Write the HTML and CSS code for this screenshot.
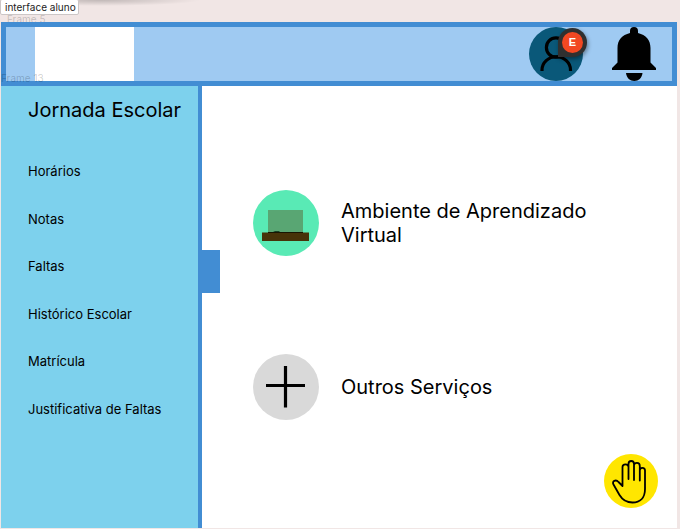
FILE: index.html
```html
<!DOCTYPE html>
<html lang="pt-BR">
<head>
<meta charset="utf-8">
<meta name="viewport" content="width=device-width, initial-scale=1">
<title>interface aluno</title>
<link rel="stylesheet" href="styles.css">
</head>
<body>
<div class="canvas-bar">
  <span class="frame-title">interface aluno</span>
  <span class="frame-label frame-label-top">Frame 5</span>
</div>
<header class="topbar">
  <div class="logo"></div>
  <span class="frame-label frame-label-side">Frame 13</span>
  <div class="actions">
    <button class="avatar" type="button" aria-label="Perfil">
      <svg viewBox="0 0 54 54" fill="none" stroke="#000" stroke-width="3.2">
        <circle cx="27" cy="20.500" r="9.600"/>
        <path d="M13 44v-1a14 13 0 0 1 28.500 0v1"/>
      </svg>
      <span class="pin"><span class="pin-face">E</span></span>
    </button>
    <button class="bell" type="button" aria-label="Notificações">
      <svg viewBox="0 0 44 54">
        <path d="M18 6V4a4 4 0 0 1 8 0v2c8 2 12.500 7 12.500 15v14.500L44 41v2H0v-2l5.500-5.500V21C5.500 13 10 8 18 6z"/>
        <path d="M14 46h16.500c-.5 5-4 8-8.200 8S14.500 51 14 46z"/>
      </svg>
    </button>
  </div>
</header>
<div class="layout">
  <aside class="sidebar">
    <h1>Jornada Escolar</h1>
    <nav class="menu">
      <a href="#horarios">Horários</a>
      <a href="#notas">Notas</a>
      <a href="#faltas">Faltas</a>
      <a href="#historico">Histórico Escolar</a>
      <a href="#matricula">Matrícula</a>
      <a href="#justificativa">Justificativa de Faltas</a>
    </nav>
    <button class="handle" type="button" aria-label="Recolher menu"></button>
  </aside>
  <main class="services">
    <a class="service" href="#ambiente">
      <svg class="service-icon" viewBox="0 0 66 66">
        <circle cx="33" cy="33" r="33" fill="#59eab5"/>
        <path fill="#59a673" d="M15 20h35v22H15z"/>
        <path fill="#473309" d="M9 42.500h47V51H9z"/>
        <path fill="#181603" d="M15 42h35v1H15z"/>
        <path fill="#164426" d="M20 42l2-1h4l1 1z"/>
      </svg>
      <span class="service-name">Ambiente de Aprendizado Virtual</span>
    </a>
    <a class="service" href="#outros">
      <svg class="service-icon" viewBox="0 0 66 66">
        <circle cx="33" cy="33" r="33" fill="#d9d9d9"/>
        <path d="M32.500 12v41.500M13 31.500h39" stroke="#000" stroke-width="3.200"/>
      </svg>
      <span class="service-name">Outros Serviços</span>
    </a>
    <button class="help" type="button" aria-label="Levantar a mão">
      <svg viewBox="0 0 54 54" fill="none" stroke="#000" stroke-width="1.800" stroke-linejoin="round" stroke-linecap="round">
        <path d="M18.500 32V13C18.500 9.500 24.500 9.500 24.500 13V25 10C24.500 6 30 6 30 10V26 11.500C30 8 35.800 8 35.800 12V26.500 16.500C35.800 13 41 13 41 16.500V35C41 44 36 48.500 28.500 48.500C22 48.500 18.500 46 15.500 41L9.500 30.500C7.500 27 12 25 14.500 28Z"/>
      </svg>
    </button>
  </main>
</div>
</body>
</html>
```

FILE: styles.css
```css
* {
  box-sizing: border-box;
}

body {
  display: flex;
  flex-direction: column;
  min-height: 100vh;
  margin: 0;
  padding: 0 3px 1px 1px;
  background: #f1e6e5;
  color: #000;
  font-family: Inter, "Liberation Sans", sans-serif;
}

button {
  padding: 0;
  border: 0;
  cursor: pointer;
}

a {
  color: inherit;
  text-decoration: none;
}

svg {
  display: block;
}

/* Canvas strip above the frame */
.canvas-bar {
  position: relative;
  height: 22px;
  background: radial-gradient(ellipse at 50% 0, #0003, #0000 70%) left top / 200px 6px no-repeat;
}

.frame-title {
  position: absolute;
  z-index: 1;
  top: -1px;
  left: -1px;
  padding: 0 2px 0 4px;
  border: 1px solid #ccc6c6;
  border-radius: 2px;
  background: #fff;
  color: #222;
  font-size: 10px;
  line-height: 14px;
}

.frame-label {
  position: absolute;
  color: #0003;
  font-size: 10px;
  line-height: 12px;
}

.frame-label-top {
  top: 13px;
  left: 6px;
}

.frame-label-side {
  bottom: -3px;
  left: -5px;
}

/* Header */
.topbar {
  position: relative;
  display: flex;
  justify-content: space-between;
  padding: 0 16px 0 29px;
  border: 5px solid #428dd3;
  background: #9fcaf2;
}

.logo {
  width: 99px;
  background: #fff;
}

.actions {
  display: flex;
  gap: 29px;
}

.avatar {
  position: relative;
  width: 54px;
  height: 54px;
  border-radius: 50%;
  background: #0a5879;
}

.bell {
  width: 44px;
  height: 54px;
  background: none;
}

.pin {
  position: absolute;
  top: 1px;
  right: -4px;
  padding: 4px;
  border-radius: 50% 50% 50% 0;
  background: #303030;
  box-shadow: 1px 2px 4px #0006;
}

.pin-face {
  display: block;
  width: 21px;
  border-radius: 50%;
  background: #f24822;
  color: #fff;
  font-size: 11px;
  font-weight: 600;
  line-height: 21px;
  text-align: center;
}

/* Sidebar and content */
.layout {
  display: flex;
  flex: 1;
}

.sidebar {
  position: relative;
  z-index: 1;
  flex: 0 0 201px;
  padding: 12px 8px 12px 27px;
  border-right: 4px solid #428dd3;
  background: #7dd1ed;
}

.sidebar h1 {
  margin: 0 0 41px;
  font-size: 20px;
  font-weight: 400;
  line-height: 24px;
}

.menu {
  display: flex;
  flex-direction: column;
  justify-content: space-between;
  min-height: 254px;
  font-size: 13px;
  line-height: 16px;
}

.handle {
  position: absolute;
  top: 164px;
  right: -22px;
  width: 19px;
  height: 43px;
  background: #428dd3;
}

.services {
  position: relative;
  display: flex;
  flex: 1;
  flex-direction: column;
  gap: 98px;
  padding: 104px 51px 20px;
  background: #fff;
}

.service {
  display: flex;
  align-items: center;
  gap: 22px;
}

.service-icon {
  flex: none;
  width: 66px;
  height: 66px;
}

.service-name {
  max-width: 260px;
  font-size: 20px;
  line-height: 24px;
}

.help {
  position: absolute;
  right: 19px;
  bottom: 20px;
  width: 54px;
  height: 54px;
  border-radius: 50%;
  background: #ffe600;
}
```
